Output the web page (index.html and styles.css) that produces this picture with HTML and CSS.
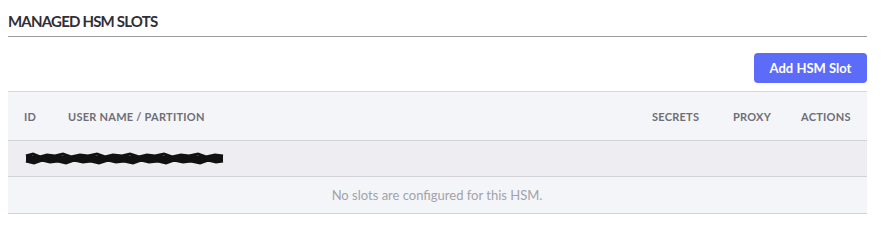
FILE: index.html
```html
<!DOCTYPE html>
<html>
<head>
<meta charset="utf-8">
<link rel="stylesheet" href="styles.css">
</head>
<body>
<section class="panel">
  <h2 class="title">MANAGED HSM SLOTS</h2>
  <div class="toolbar">
    <button class="btn-primary">Add HSM Slot</button>
  </div>
  <div class="table">
    <div class="row head">
      <div class="cell">ID</div>
      <div class="cell">USER NAME / PARTITION</div>
      <div class="cell">SECRETS</div>
      <div class="cell">PROXY</div>
      <div class="cell">ACTIONS</div>
    </div>
    <div class="row group">
      <svg class="redact" width="200" height="14" viewBox="0 0 200 14">
        <path d="M1 4 L8 2 L15 5 L22 3 L30 4 L38 2 L46 5 L55 3 L63 4 L72 2 L80 5 L88 3 L97 4 L105 2 L114 5 L122 3 L130 4 L139 2 L147 5 L156 3 L164 4 L173 2 L181 5 L190 3 L198 4" />
        <path d="M1 9 L9 11 L17 8 L25 10 L33 9 L41 11 L49 8 L58 10 L66 9 L74 11 L83 8 L91 10 L99 9 L108 11 L116 8 L124 10 L133 9 L141 11 L149 8 L158 10 L166 9 L175 11 L183 8 L191 10 L198 9" />
        <rect x="1" y="4" width="197" height="6" />
      </svg>
    </div>
    <div class="row empty">No slots are configured for this HSM.</div>
  </div>
</section>
</body>
</html>
```
FILE: styles.css
```css
html, body {
  margin: 0;
  padding: 0;
  background: #ffffff;
}
body {
  padding: 8px 14px 0 8px;
  font-family: "Lato", "Noto Sans", sans-serif;
}
.title {
  margin: 0;
  padding: 3px 0 5px 0;
  font-size: 15px;
  line-height: 20px;
  font-weight: 700;
  color: #2f2f37;
  border-bottom: 1px solid #9c9ca3;
  letter-spacing: -0.8px;
}
.toolbar {
  display: flex;
  justify-content: flex-end;
  padding-top: 16px;
}
.btn-primary {
  display: block;
  width: 113px;
  height: 30px;
  border: none;
  border-radius: 4px;
  background: #5c6cf8;
  color: #ffffff;
  font-family: inherit;
  font-size: 13px;
  font-weight: 700;
  padding: 0;
  margin: 0;
}
.table {
  margin-top: 8px;
  border-top: 1px solid #d6d6dc;
}
.row {
  display: grid;
  grid-template-columns: 44px 1fr 81px 68px 49px;
  padding: 0 17px 0 16px;
  align-items: center;
  border-bottom: 1px solid #d3d2d8;
}
.head {
  height: 48px;
  background: #f4f5f9;
  font-size: 11px;
  font-weight: 700;
  color: #6e6e76;
  letter-spacing: 0.25px;
}
.group {
  height: 35px;
  background: #ededf2;
  display: flex;
  align-items: center;
}
.redact {
  display: block;
  margin-left: 1px;
  margin-top: 1px;
}
.redact path {
  fill: none;
  stroke: #111111;
  stroke-width: 3;
}
.redact rect {
  fill: #111111;
}
.empty {
  display: flex;
  justify-content: center;
  height: 36px;
  background: #f4f5f9;
  font-size: 13px;
  color: #a2a2aa;
}
```
